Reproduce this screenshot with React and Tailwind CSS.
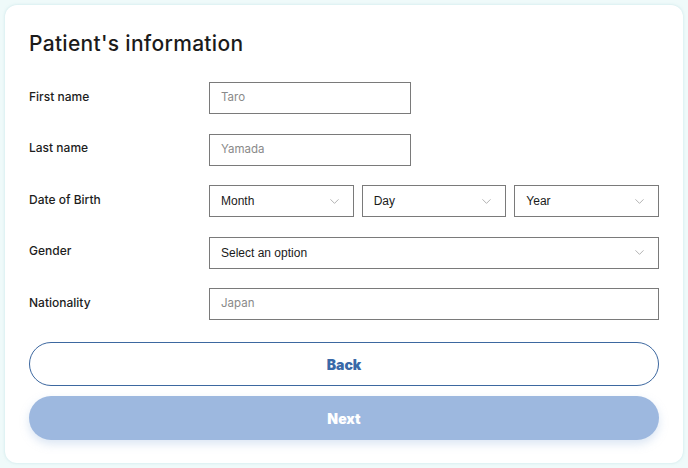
import { ChevronDown } from 'lucide-react';

const poppins = { fontFamily: 'Inter, "Noto Sans", sans-serif' };

function Row({ label, children }) {
    return (
        <div className="flex items-center h-[32px]">
            <div className="w-[180px] shrink-0 text-[12px] font-medium text-[#1d1d1d] -mt-[3px]">{label}</div>
            <div className="flex-1 flex gap-[8px]">{children}</div>
        </div>
    );
}

function TextBox({ value, wide }) {
    return (
        <div className={`${wide ? 'flex-1' : 'w-[202px]'} h-[32px] border border-[#7a7a7a] flex items-center px-[11px] text-[11.5px] text-[#8a8a8a]`}>
            {value}
        </div>
    );
}

function SelectBox({ value }) {
    return (
        <div
            className="flex-1 h-[32px] border border-[#7a7a7a] flex items-center justify-between pl-[11px] pr-[11px] text-[12px] text-[#1a1a1a]"
            style={{ fontFamily: '"Liberation Sans", Arial, sans-serif' }}
        >
            <span>{value}</span>
            <ChevronDown size={15} strokeWidth={1.2} className="text-[#9a9a9a]" />
        </div>
    );
}

export default function App() {
    return (
        <div className="w-[688px] h-[468px] bg-[#effafa] p-[5px]" style={poppins}>
            <div className="w-[678px] h-[458px] bg-white rounded-[12px] px-[24px] pt-[26px] shadow-[0_0_3px_rgba(160,210,215,0.5)]">
                <h1 className="text-[21px] tracking-[0.3px] font-medium text-[#1b1b1b] leading-[26px] mb-[25px]">Patient's information</h1>
                <div className="flex flex-col gap-[19.5px]">
                    <Row label="First name"><TextBox value="Taro" /></Row>
                    <Row label="Last name"><TextBox value="Yamada" /></Row>
                    <Row label="Date of Birth">
                        <SelectBox value="Month" />
                        <SelectBox value="Day" />
                        <SelectBox value="Year" />
                    </Row>
                    <Row label="Gender"><SelectBox value="Select an option" /></Row>
                    <Row label="Nationality"><TextBox value="Japan" wide /></Row>
                </div>
                <div className="flex flex-col gap-[10px] mt-[22px]">
                    <button className="h-[44px] w-full rounded-full border border-[#3d68a0] bg-white text-[#3a69a8] text-[14px] font-black">Back</button>
                    <button className="h-[44px] w-full rounded-full bg-[#9db8df] text-white text-[14px] font-black shadow-[0_4px_10px_rgba(150,180,220,0.35)]">Next</button>
                </div>
            </div>
        </div>
    );
}
